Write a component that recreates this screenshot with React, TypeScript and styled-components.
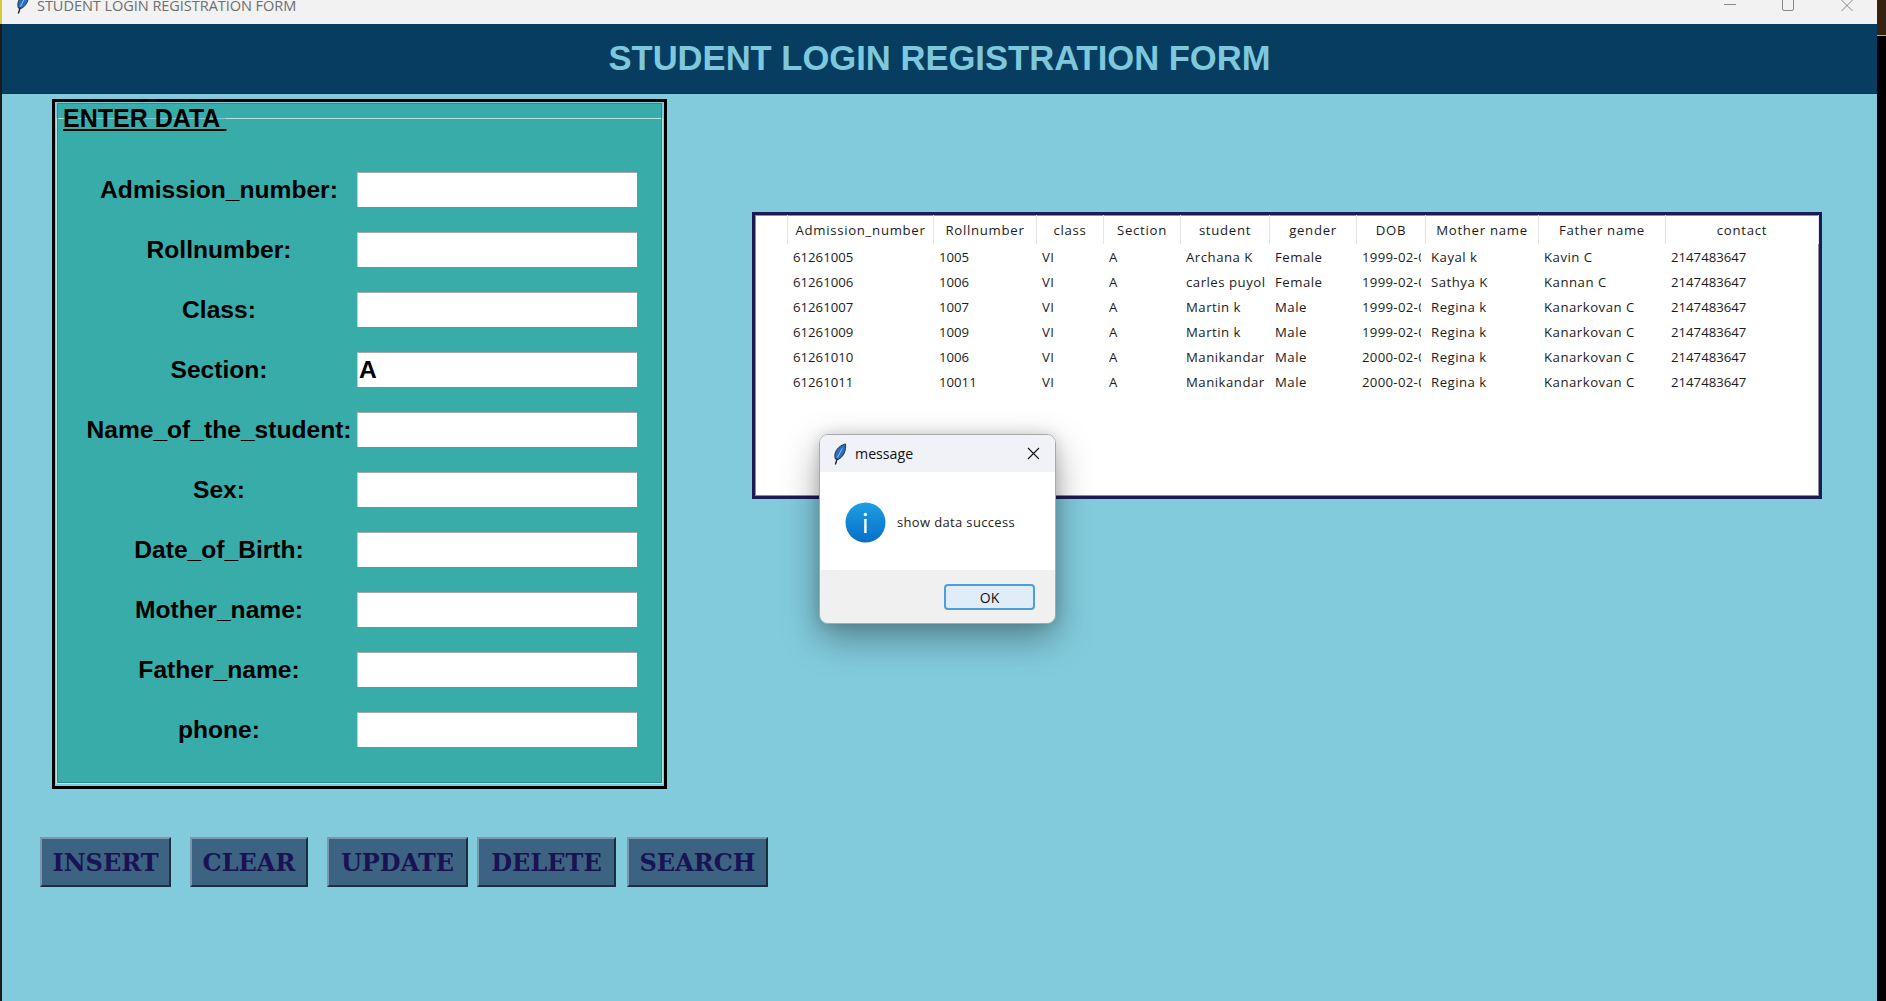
import React from "react";
import styled, { createGlobalStyle } from "styled-components";

const Global = createGlobalStyle`
  html, body { margin: 0; padding: 0; background: #000; overflow: hidden; }
  * { box-sizing: border-box; }
`;

const Screen = styled.div`
  position: relative;
  display: flex;
  width: 1886px;
  height: 1001px;
  overflow: hidden;
  background: #000;
`;
const LeftEdge = styled.div`
  flex: 0 0 2px;
  background: #1b1b1b;
`;
const LeftEdgeCap = styled.div`
  height: 24px;
  background: #d8c93a;
`;
const RightEdge = styled.div`
  flex: 0 0 9px;
  background: #000;
`;
const RightEdgeCap = styled.div`
  height: 36px;
  background: #37220f;
  border-bottom: 1px solid #aaa;
`;
const Window = styled.div`
  flex: 1;
  display: flex;
  flex-direction: column;
  background: #82cbdd;
  min-width: 0;
`;
const TitleBar = styled.div`
  flex: 0 0 24px;
  display: flex;
  align-items: flex-start;
  background: #f2f2f2;
  overflow: hidden;
`;
const TitleIcon = styled.svg`
  width: 15px;
  height: 22px;
  margin: -8px 0 0 13px;
`;
const TitleText = styled.span`
  margin: -5px 0 0 7px;
  font: 14.55px/20px "Open Sans", sans-serif;
  color: #6e6e6e;
  white-space: nowrap;
  letter-spacing: -0.06px;
`;
const Controls = styled.div`
  margin-left: auto;
  display: flex;
  align-items: flex-start;
  margin-right: 24px;
`;
const Control = styled.svg<{ $gap: number }>`
  width: 12px;
  height: 12px;
  display: block;
  margin-left: ${(p) => p.$gap}px;
`;
const Header = styled.header`
  flex: 0 0 70px;
  display: flex;
  align-items: center;
  justify-content: center;
  background: #083d62;
  border-bottom: 1px solid #0a3352;
`;
const HeaderTitle = styled.h1`
  margin: 0;
  font: bold 34.6px/1 "Liberation Sans", Arial, sans-serif;
  color: #7ec8dc;
  white-space: nowrap;
`;
const TopRow = styled.div`
  display: flex;
  align-items: flex-start;
`;
const Frame = styled.div`
  flex: 0 0 615px;
  height: 690px;
  margin: 5px 0 0 50px;
  border: 3px solid #000;
  padding: 0 1px 2px;
`;
const Group = styled.fieldset`
  margin: 0;
  height: 100%;
  min-width: 0;
  border: 1px solid #b9e4e2;
  outline: 1px solid #2a8f8c;
  outline-offset: -2px;
  padding: 0 24px 0 27px;
  background: linear-gradient(#38aca9, #38aca9);
  box-shadow: 0 -16px 0 -1px #38aca9;
`;
const Legend = styled.legend`
  margin-left: -21px;
  padding: 0;
  font: bold 25px/32px "Liberation Sans", Arial, sans-serif;
  color: #000;
  text-decoration: underline;
  white-space: pre;
`;
const Rows = styled.div`
  display: grid;
  grid-template-columns: 270px 280px;
  column-gap: 3px;
  row-gap: 25px;
  padding-top: 38px;
`;
const Label = styled.label`
  height: 35px;
  display: flex;
  align-items: center;
  justify-content: center;
  font: bold 24.6px/34px "Liberation Sans", Arial, sans-serif;
  color: #000;
  white-space: nowrap;
`;
const Entry = styled.input`
  width: 280px;
  height: 35px;
  padding: 0 1px;
  border: 0;
  border-top: 1px solid #aaa;
  border-left: 1px solid #ccc;
  background: #fff;
  font: bold 24.6px/33px "Liberation Sans", Arial, sans-serif;
  color: #000;
  outline: none;
`;
const TablePanel = styled.div`
  flex: 0 0 1070px;
  height: 287px;
  margin: 118px 0 0 85px;
  border: 3px solid #1b1b55;
  background: #fff;
  box-shadow: inset 0 0 0 1px #8d8da0;
  padding: 0 1px;
  overflow: hidden;
`;
const DataTable = styled.table`
  width: 1062px;
  table-layout: fixed;
  border-collapse: collapse;
  font: 13.2px "Open Sans", sans-serif;
  color: #1c1c1c;
`;
const HeadCell = styled.th`
  height: 29px;
  padding: 0 0 0 1px;
  font-weight: 400;
  letter-spacing: 0.7px;
  text-align: center;
  border-right: 1px solid #e5e5e5;
  white-space: nowrap;
  overflow: hidden;
`;
const Cell = styled.td`
  height: 25px;
  padding: 0 0 0 6px;
  white-space: nowrap;
`;
const CellText = styled.div<{ $spacing: number }>`
  margin-right: 4px;
  overflow: hidden;
  letter-spacing: ${(p) => p.$spacing}px;
`;
const ButtonRow = styled.div`
  display: flex;
  margin: 48px 0 0 38px;
`;
const ActionButton = styled.button<{ $width: number; $gap: number }>`
  flex: 0 0 ${(p) => p.$width}px;
  height: 50px;
  margin-left: ${(p) => p.$gap}px;
  padding: 2px 0 0;
  background: #3c6382;
  border: 2px solid;
  border-color: #7c97ab #1c2f40 #1c2f40 #7c97ab;
  font: bold 24px/1 "DejaVu Serif", "Liberation Serif", serif;
  color: #191353;
`;
const Dialog = styled.div`
  position: absolute;
  left: 819px;
  top: 434px;
  width: 237px;
  height: 190px;
  display: flex;
  flex-direction: column;
  border: 1px solid #a9a9a9;
  border-radius: 9px;
  overflow: hidden;
  box-shadow: 0 14px 36px rgba(0, 0, 0, 0.36), 0 0 14px rgba(0, 0, 0, 0.14);
  font-family: "Open Sans", sans-serif;
`;
const DialogTitle = styled.div`
  flex: 0 0 37px;
  display: flex;
  align-items: center;
  padding: 0 15px 0 12px;
  background: #f0f2f7;
  font-size: 14.2px;
  color: #111;
`;
const DialogIcon = styled.svg`
  width: 15px;
  height: 22px;
  margin-right: 8px;
`;
const DialogClose = styled.svg`
  width: 13px;
  height: 13px;
  margin-left: auto;
`;
const DialogBody = styled.div`
  flex: 0 0 98px;
  display: flex;
  align-items: center;
  gap: 11px;
  padding: 2px 0 0 25px;
  background: #fff;
  font-size: 13px;
  letter-spacing: 0.35px;
  color: #222;
`;
const InfoIcon = styled.svg`
  width: 41px;
  height: 41px;
`;
const DialogFooter = styled.div`
  flex: 1;
  display: flex;
  align-items: flex-start;
  justify-content: flex-end;
  padding: 14px 20px 0 0;
  background: #f0f0f0;
`;
const OkButton = styled.button`
  width: 91px;
  height: 26px;
  padding: 0;
  border: 2px solid #4a9fe0;
  border-radius: 4px;
  background: #e0edf8;
  font: 14px "Open Sans", sans-serif;
  color: #111;
`;

const fields = [
  "Admission_number:",
  "Rollnumber:",
  "Class:",
  "Section:",
  "Name_of_the_student:",
  "Sex:",
  "Date_of_Birth:",
  "Mother_name:",
  "Father_name:",
  "phone:",
];

const columns: [string, number][] = [
  ["", 31],
  ["Admission_number", 146],
  ["Rollnumber", 103],
  ["class", 67],
  ["Section", 77],
  ["student", 89],
  ["gender", 87],
  ["DOB", 69],
  ["Mother name", 113],
  ["Father name", 127],
  ["contact", 153],
];

const rows = [
  ["61261005", "1005", "VI", "A", "Archana K", "Female", "1999-02-01", "Kayal k", "Kavin C", "2147483647"],
  ["61261006", "1006", "VI", "A", "carles puyol", "Female", "1999-02-01", "Sathya K", "Kannan C", "2147483647"],
  ["61261007", "1007", "VI", "A", "Martin k", "Male", "1999-02-01", "Regina k", "Kanarkovan C", "2147483647"],
  ["61261009", "1009", "VI", "A", "Martin k", "Male", "1999-02-01", "Regina k", "Kanarkovan C", "2147483647"],
  ["61261010", "1006", "VI", "A", "Manikandar", "Male", "2000-02-01", "Regina k", "Kanarkovan C", "2147483647"],
  ["61261011", "10011", "VI", "A", "Manikandar", "Male", "2000-02-01", "Regina k", "Kanarkovan C", "2147483647"],
];

const cellSpacing = (v: string) => (/^\d+$/.test(v) ? 0 : /^\d/.test(v) ? 0.3 : 0.5);

const actions: [string, number, number][] = [
  ["INSERT", 131, 0],
  ["CLEAR", 118, 19],
  ["UPDATE", 141, 19],
  ["DELETE", 139, 9],
  ["SEARCH", 141, 11],
];

const Quill = () => (
  <>
    <path d="M3.5 17.5 C1 11 6 3 14.5 1 C15.5 8 12.5 15 6.5 18 Z" fill="#2a6fc4" stroke="#1c2c40" strokeWidth="1" />
    <path d="M5.5 17 L3.5 23.5" stroke="#1c2c40" strokeWidth="1.6" fill="none" />
    <path d="M5.5 16 L11 6" stroke="#a9cdf0" strokeWidth="1" fill="none" />
  </>
);

export default function App() {
  return (
    <Screen>
      <Global />
      <LeftEdge><LeftEdgeCap /></LeftEdge>
      <Window>
        <TitleBar>
          <TitleIcon viewBox="0 0 16 24"><Quill /></TitleIcon>
          <TitleText>STUDENT LOGIN REGISTRATION FORM</TitleText>
          <Controls>
            <Control $gap={0} viewBox="0 0 12 12"><path d="M0 4.5H12" stroke="#888" /></Control>
            <Control $gap={46} viewBox="0 0 12 12"><rect x="0.5" y="-3" width="11" height="13.5" rx="1.5" fill="none" stroke="#888" /></Control>
            <Control $gap={47} viewBox="0 0 12 12"><path d="M0.5 0L11.5 11M11.5 0L0.5 11" stroke="#888" /></Control>
          </Controls>
        </TitleBar>
        <Header>
          <HeaderTitle>STUDENT LOGIN REGISTRATION FORM</HeaderTitle>
        </Header>
        <TopRow>
          <Frame>
            <Group>
              <Legend>{"ENTER DATA "}</Legend>
              <Rows>
                {fields.map((f) => (
                  <React.Fragment key={f}>
                    <Label>{f}</Label>
                    <Entry readOnly value={f === "Section:" ? "A" : ""} />
                  </React.Fragment>
                ))}
              </Rows>
            </Group>
          </Frame>
          <TablePanel>
            <DataTable>
              <colgroup>
                {columns.map(([name, w]) => (
                  <col key={name} width={w} />
                ))}
              </colgroup>
              <thead>
                <tr>
                  {columns.map(([name]) => (
                    <HeadCell key={name}>{name}</HeadCell>
                  ))}
                </tr>
              </thead>
              <tbody>
                {rows.map((r) => (
                  <tr key={r[0]}>
                    <Cell />
                    {r.map((v, i) => (
                      <Cell key={i}><CellText $spacing={cellSpacing(v)}>{v}</CellText></Cell>
                    ))}
                  </tr>
                ))}
              </tbody>
            </DataTable>
          </TablePanel>
        </TopRow>
        <ButtonRow>
          {actions.map(([name, w, g]) => (
            <ActionButton key={name} $width={w} $gap={g}>{name}</ActionButton>
          ))}
        </ButtonRow>
      </Window>
      <RightEdge><RightEdgeCap /></RightEdge>
      <Dialog>
        <DialogTitle>
          <DialogIcon viewBox="0 0 16 24"><Quill /></DialogIcon>
          message
          <DialogClose viewBox="0 0 13 13"><path d="M1 1L12 12M12 1L1 12" stroke="#111" strokeWidth="1.1" /></DialogClose>
        </DialogTitle>
        <DialogBody>
          <InfoIcon viewBox="0 0 41 41">
            <defs>
              <linearGradient id="info" x1="0" y1="0" x2="0" y2="1">
                <stop offset="0" stopColor="#1f9de3" />
                <stop offset="1" stopColor="#0670c9" />
              </linearGradient>
            </defs>
            <circle cx="20.5" cy="20.5" r="20" fill="url(#info)" />
            <rect x="19.2" y="17" width="2.4" height="14" fill="#fff" />
            <circle cx="20.4" cy="12.5" r="1.7" fill="#fff" />
          </InfoIcon>
          show data success
        </DialogBody>
        <DialogFooter>
          <OkButton>OK</OkButton>
        </DialogFooter>
      </Dialog>
    </Screen>
  );
}
